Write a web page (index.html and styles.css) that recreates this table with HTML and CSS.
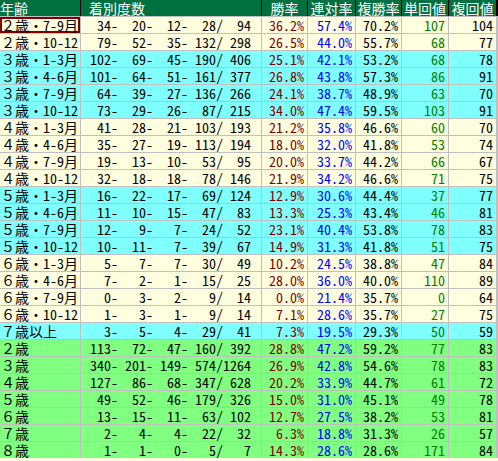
FILE: index.html
```html
<!DOCTYPE html>
<html lang="ja">
<head>
<meta charset="utf-8">
<title>年齢別成績</title>
<link rel="stylesheet" href="styles.css">
</head>
<body>
<div class="sheet">
  <div class="row head">
    <div class="h-age">年齢</div>
    <div class="h-rec">着別度数</div>
    <div class="h-c">勝率</div>
    <div class="h-c">連対率</div>
    <div class="h-c">複勝率</div>
    <div class="h-c">単回値</div>
    <div class="h-c">複回値</div>
  </div>

  <div class="row cream"><div class="age sel">２歳・7-9月</div><div class="rec">  34-  20-  12-  28/  94</div><div class="win">36.2%</div><div class="ren">57.4%</div><div class="fuku">70.2%</div><div class="tan">107</div><div class="fk">104</div></div>
  <div class="row cream"><div class="age">２歳・10-12</div><div class="rec">  79-  52-  35- 132/ 298</div><div class="win">26.5%</div><div class="ren">44.0%</div><div class="fuku">55.7%</div><div class="tan">68</div><div class="fk">77</div></div>

  <div class="row cyan"><div class="age">３歳・1-3月</div><div class="rec"> 102-  69-  45- 190/ 406</div><div class="win">25.1%</div><div class="ren">42.1%</div><div class="fuku">53.2%</div><div class="tan">68</div><div class="fk">78</div></div>
  <div class="row cyan"><div class="age">３歳・4-6月</div><div class="rec"> 101-  64-  51- 161/ 377</div><div class="win">26.8%</div><div class="ren">43.8%</div><div class="fuku">57.3%</div><div class="tan">86</div><div class="fk">91</div></div>
  <div class="row cyan"><div class="age">３歳・7-9月</div><div class="rec">  64-  39-  27- 136/ 266</div><div class="win">24.1%</div><div class="ren">38.7%</div><div class="fuku">48.9%</div><div class="tan">63</div><div class="fk">70</div></div>
  <div class="row cyan"><div class="age">３歳・10-12</div><div class="rec">  73-  29-  26-  87/ 215</div><div class="win">34.0%</div><div class="ren">47.4%</div><div class="fuku">59.5%</div><div class="tan">103</div><div class="fk">91</div></div>

  <div class="row cream"><div class="age">４歳・1-3月</div><div class="rec">  41-  28-  21- 103/ 193</div><div class="win">21.2%</div><div class="ren">35.8%</div><div class="fuku">46.6%</div><div class="tan">60</div><div class="fk">70</div></div>
  <div class="row cream"><div class="age">４歳・4-6月</div><div class="rec">  35-  27-  19- 113/ 194</div><div class="win">18.0%</div><div class="ren">32.0%</div><div class="fuku">41.8%</div><div class="tan">53</div><div class="fk">74</div></div>
  <div class="row cream"><div class="age">４歳・7-9月</div><div class="rec">  19-  13-  10-  53/  95</div><div class="win">20.0%</div><div class="ren">33.7%</div><div class="fuku">44.2%</div><div class="tan">66</div><div class="fk">67</div></div>
  <div class="row cream"><div class="age">４歳・10-12</div><div class="rec">  32-  18-  18-  78/ 146</div><div class="win">21.9%</div><div class="ren">34.2%</div><div class="fuku">46.6%</div><div class="tan">71</div><div class="fk">75</div></div>

  <div class="row cyan"><div class="age">５歳・1-3月</div><div class="rec">  16-  22-  17-  69/ 124</div><div class="win">12.9%</div><div class="ren">30.6%</div><div class="fuku">44.4%</div><div class="tan">37</div><div class="fk">77</div></div>
  <div class="row cyan"><div class="age">５歳・4-6月</div><div class="rec">  11-  10-  15-  47/  83</div><div class="win">13.3%</div><div class="ren">25.3%</div><div class="fuku">43.4%</div><div class="tan">46</div><div class="fk">81</div></div>
  <div class="row cyan"><div class="age">５歳・7-9月</div><div class="rec">  12-   9-   7-  24/  52</div><div class="win">23.1%</div><div class="ren">40.4%</div><div class="fuku">53.8%</div><div class="tan">78</div><div class="fk">83</div></div>
  <div class="row cyan"><div class="age">５歳・10-12</div><div class="rec">  10-  11-   7-  39/  67</div><div class="win">14.9%</div><div class="ren">31.3%</div><div class="fuku">41.8%</div><div class="tan">51</div><div class="fk">75</div></div>

  <div class="row cream"><div class="age">６歳・1-3月</div><div class="rec">   5-   7-   7-  30/  49</div><div class="win">10.2%</div><div class="ren">24.5%</div><div class="fuku">38.8%</div><div class="tan">47</div><div class="fk">84</div></div>
  <div class="row cream"><div class="age">６歳・4-6月</div><div class="rec">   7-   2-   1-  15/  25</div><div class="win">28.0%</div><div class="ren">36.0%</div><div class="fuku">40.0%</div><div class="tan">110</div><div class="fk">89</div></div>
  <div class="row cream"><div class="age">６歳・7-9月</div><div class="rec">   0-   3-   2-   9/  14</div><div class="win">0.0%</div><div class="ren">21.4%</div><div class="fuku">35.7%</div><div class="tan">0</div><div class="fk">64</div></div>
  <div class="row cream"><div class="age">６歳・10-12</div><div class="rec">   1-   3-   1-   9/  14</div><div class="win">7.1%</div><div class="ren">28.6%</div><div class="fuku">35.7%</div><div class="tan">27</div><div class="fk">75</div></div>

  <div class="row cyan"><div class="age">７歳以上</div><div class="rec">   3-   5-   4-  29/  41</div><div class="win">7.3%</div><div class="ren">19.5%</div><div class="fuku">29.3%</div><div class="tan">50</div><div class="fk">59</div></div>

  <div class="row green"><div class="age">２歳</div><div class="rec"> 113-  72-  47- 160/ 392</div><div class="win">28.8%</div><div class="ren">47.2%</div><div class="fuku">59.2%</div><div class="tan">77</div><div class="fk">83</div></div>
  <div class="row green"><div class="age">３歳</div><div class="rec"> 340- 201- 149- 574/1264</div><div class="win">26.9%</div><div class="ren">42.8%</div><div class="fuku">54.6%</div><div class="tan">78</div><div class="fk">83</div></div>
  <div class="row green"><div class="age">４歳</div><div class="rec"> 127-  86-  68- 347/ 628</div><div class="win">20.2%</div><div class="ren">33.9%</div><div class="fuku">44.7%</div><div class="tan">61</div><div class="fk">72</div></div>
  <div class="row green"><div class="age">５歳</div><div class="rec">  49-  52-  46- 179/ 326</div><div class="win">15.0%</div><div class="ren">31.0%</div><div class="fuku">45.1%</div><div class="tan">49</div><div class="fk">78</div></div>
  <div class="row green"><div class="age">６歳</div><div class="rec">  13-  15-  11-  63/ 102</div><div class="win">12.7%</div><div class="ren">27.5%</div><div class="fuku">38.2%</div><div class="tan">53</div><div class="fk">81</div></div>
  <div class="row green"><div class="age">７歳</div><div class="rec">   2-   4-   4-  22/  32</div><div class="win">6.3%</div><div class="ren">18.8%</div><div class="fuku">31.3%</div><div class="tan">26</div><div class="fk">57</div></div>
  <div class="row green"><div class="age">８歳</div><div class="rec">   1-   1-   0-   5/   7</div><div class="win">14.3%</div><div class="ren">28.6%</div><div class="fuku">28.6%</div><div class="tan">171</div><div class="fk">84</div></div>
</div>
</body>
</html>
```

FILE: styles.css
```css
html, body {
  margin: 0;
  padding: 0;
}

body {
  background: #ffffe0;
}

.sheet {
  width: 498px;
  display: flex;
  flex-direction: column;
  gap: 1px;
  background: #c0c0c0;
  font-family: "Noto Sans Mono CJK JP", "Noto Sans CJK JP", monospace;
  font-size: 14px;
  color: #000;
}

.row {
  display: grid;
  grid-template-columns: 80px 180px 45px 47px 45px 46px 47px;
  column-gap: 1px;
  height: 16px;
  line-height: 16px;
}

.row > div {
  white-space: pre;
  overflow: hidden;
  text-align: right;
  padding-right: 3px;
}

.head {
  background: #000;
}

.head > div {
  background: #007040;
  color: #fff;
  font-family: "Noto Sans CJK JP", sans-serif;
  font-size: 14px;
}

.head .h-age {
  text-align: left;
  padding-left: 0;
}

.head .h-rec {
  text-align: left;
  padding-left: 8px;
}

.head .h-c {
  text-align: center;
  padding: 0;
}

.cream > div { background: #ffffe0; }
.cyan > div { background: #80ffff; }
.green > div { background: #80ff80; }

.row > .age {
  text-align: left;
  padding-left: 1px;
  padding-right: 0;
}

.row > .rec {
  text-align: left;
  padding-left: 2px;
  padding-right: 0;
}

.row > .sel {
  box-shadow: inset 0 0 0 2px #800000;
}

.win { color: #800000; }
.ren { color: #0000ff; }
.fuku { color: #000; }
.tan { color: #008000; }
.fk { color: #000; }
```
